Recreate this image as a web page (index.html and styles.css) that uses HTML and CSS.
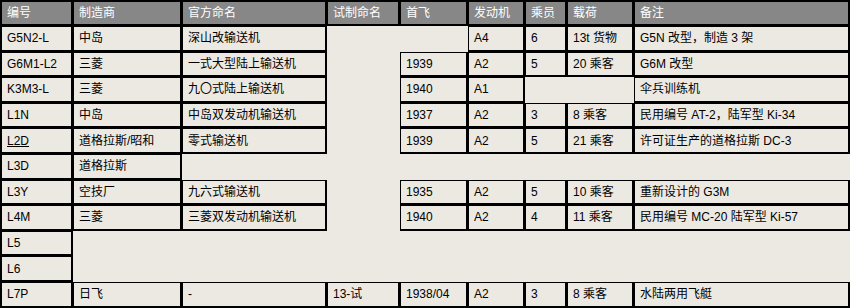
FILE: index.html
```html
<!DOCTYPE html>
<html lang="zh">
<head>
<meta charset="utf-8">
<title>输送机</title>
<link rel="stylesheet" href="styles.css">
</head>
<body>
<table class="tbl">
  <colgroup>
    <col class="w1"><col class="w2"><col class="w3"><col class="w4"><col class="w5"><col class="w6"><col class="w7"><col class="w8"><col class="w9">
  </colgroup>
  <tr class="head">
    <th>编号</th><th>制造商</th><th>官方命名</th><th>试制命名</th><th>首飞</th><th>发动机</th><th>乘员</th><th>载荷</th><th>备注</th>
  </tr>
  <tr>
    <td>G5N2-L</td><td>中岛</td><td>深山改输送机</td><td class="gap"></td><td class="gap"></td><td>A4</td><td>6</td><td>13t 货物</td><td>G5N 改型，制造 3 架</td>
  </tr>
  <tr>
    <td>G6M1-L2</td><td>三菱</td><td>一式大型陆上输送机</td><td class="gap"></td><td>1939</td><td>A2</td><td>5</td><td>20 乘客</td><td>G6M 改型</td>
  </tr>
  <tr>
    <td>K3M3-L</td><td>三菱</td><td>九〇式陆上输送机</td><td class="gap"></td><td>1940</td><td>A1</td><td class="gap"></td><td class="gap"></td><td>伞兵训练机</td>
  </tr>
  <tr>
    <td>L1N</td><td>中岛</td><td>中岛双发动机输送机</td><td class="gap"></td><td>1937</td><td>A2</td><td>3</td><td>8 乘客</td><td>民用编号 AT-2，陆军型 Ki-34</td>
  </tr>
  <tr>
    <td><a class="link" href="#">L2D</a></td><td>道格拉斯/昭和</td><td>零式输送机</td><td class="gap"></td><td>1939</td><td>A2</td><td>5</td><td>21 乘客</td><td>许可证生产的道格拉斯 DC-3</td>
  </tr>
  <tr>
    <td>L3D</td><td>道格拉斯</td>
  </tr>
  <tr>
    <td>L3Y</td><td>空技厂</td><td>九六式输送机</td><td class="gap"></td><td>1935</td><td>A2</td><td>5</td><td>10 乘客</td><td>重新设计的 G3M</td>
  </tr>
  <tr>
    <td>L4M</td><td>三菱</td><td>三菱双发动机输送机</td><td class="gap"></td><td>1940</td><td>A2</td><td>4</td><td>11 乘客</td><td>民用编号 MC-20 陆军型 Ki-57</td>
  </tr>
  <tr>
    <td>L5</td>
  </tr>
  <tr>
    <td>L6</td>
  </tr>
  <tr>
    <td>L7P</td><td>日飞</td><td>-</td><td>13-试</td><td>1938/04</td><td>A2</td><td>3</td><td>8 乘客</td><td>水陆两用飞艇</td>
  </tr>
</table>
</body>
</html>
```
FILE: styles.css
```css
html, body {
  margin: 0;
  padding: 0;
  background: #ece9e3;
}
body {
  font-family: "Liberation Sans", "Noto Sans CJK SC", sans-serif;
  font-size: 12px;
  color: #000;
}
.tbl {
  width: 850px;
  table-layout: fixed;
  border-collapse: separate;
  border-spacing: 0;
  border-top: 1px solid #000;
  border-left: 1px solid #000;
}
.w1 { width: 72px; }
.w2 { width: 109px; }
.w3 { width: 145px; }
.w4 { width: 73px; }
.w5 { width: 68px; }
.w6 { width: 57px; }
.w7 { width: 42px; }
.w8 { width: 67px; }
.w9 { width: 216px; }
.tbl th, .tbl td {
  box-sizing: border-box;
  border-style: solid;
  border-color: #000;
  border-width: 1px 2px 2px 1px;
  padding: 0 2px 0 5px;
  text-align: left;
  font-weight: normal;
  white-space: nowrap;
  overflow: hidden;
  line-height: 14px;
  vertical-align: middle;
}
.tbl tr { height: 25.6px; }
.tbl tr.head { height: 25px; }
.tbl th {
  background: #878787;
  color: #fff;
}
.tbl td.gap {
  border: none;
  padding: 0;
}
.link {
  color: #000;
  text-decoration: underline;
}
```
